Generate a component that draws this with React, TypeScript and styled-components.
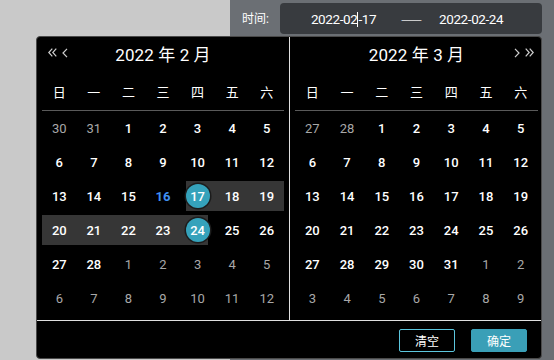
import React from 'react';
import styled, { createGlobalStyle } from 'styled-components';

const Global = createGlobalStyle`
  html, body { margin: 0; padding: 0; }
  body {
    background: #c9c9c9;
    font-family: Roboto, "Noto Sans CJK SC", sans-serif;
    width: 554px;
    height: 360px;
    overflow: hidden;
  }
  * { box-sizing: border-box; }
`;

const Page = styled.div`
  position: relative;
  display: flex;
  width: 554px;
  height: 360px;
`;

const Backdrop = styled.div`
  width: 230px;
  flex-shrink: 0;
`;

const Panel = styled.div`
  flex: 1;
  background: #6b6f74;
  padding: 3px 12px 0 12px;
`;

const FilterRow = styled.div`
  display: flex;
  align-items: center;
  gap: 11px;
  height: 31px;
`;

const Label = styled.span`
  color: #fff;
  font-size: 12px;
  margin-top: -3px;
`;

const RangeInput = styled.div`
  width: 262px;
  height: 31px;
  border-radius: 4px;
  background: #383b3f;
  display: flex;
  align-items: center;
  padding-left: 31px;
  color: #fff;
  font-size: 13.5px;
  letter-spacing: -0.4px;
`;

const DateText = styled.span`
  white-space: nowrap;
`;

const Caret = styled.span`
  display: inline-block;
  width: 0;
  height: 15px;
  border-left: 1px solid #fff;
  vertical-align: -3px;
`;

const Separator = styled.span`
  margin: 0 17px 0 25px;
  font-family: "Noto Sans CJK SC", sans-serif;
  font-size: 12.5px;
  color: #e6e6e6;
  letter-spacing: 0;
`;

const Popup = styled.div`
  position: absolute;
  left: 36px;
  top: 36px;
  width: 506px;
  height: 323px;
  background: #000;
  border: 1px solid #4a4a4a;
  border-radius: 4px;
  display: flex;
  flex-direction: column;
`;

const Months = styled.div`
  display: flex;
  height: 283px;
`;

const MonthPanel = styled.div<{ $side: 'left' | 'right' }>`
  flex: ${(p) => (p.$side === 'left' ? '0 0 253px' : '1')};
  border-right: ${(p) => (p.$side === 'left' ? '1px solid #e0e0e0' : 'none')};
  padding: ${(p) => (p.$side === 'left' ? '0 5px 0 5px' : '0 3px 0 5px')};
  display: flex;
  flex-direction: column;
`;

const Header = styled.div`
  display: grid;
  grid-template-columns: 1fr auto 1fr;
  align-items: center;
  height: 33px;
`;

const Title = styled.div`
  color: #fff;
  font-size: 17px;
  letter-spacing: 0.1px;
`;

const NavGroup = styled.div<{ $align: 'start' | 'end' }>`
  display: flex;
  align-items: center;
  gap: 5px;
  justify-self: ${(p) => p.$align};
  padding-left: ${(p) => (p.$align === 'start' ? '6px' : '0')};
  padding-right: ${(p) => (p.$align === 'end' ? '4px' : '0')};
  margin-top: -2px;
  color: #cfcfcf;
`;

const WeekRow = styled.div`
  display: grid;
  grid-template-columns: repeat(7, 1fr);
  align-items: center;
  height: 41px;
  padding-top: 3px;
  border-bottom: 1px solid #5a5a5a;
`;

const WeekDay = styled.div`
  text-align: center;
  color: #fff;
  font-size: 13px;
`;

const DayGrid = styled.div`
  display: grid;
  grid-template-columns: repeat(7, 1fr);
  grid-auto-rows: 34px;
`;

type RangePos = 'start' | 'mid' | 'end' | undefined;

const BAND = '#363636';

const Cell = styled.div<{ $range: RangePos }>`
  height: 30px;
  margin: 2px 0;
  display: flex;
  align-items: center;
  justify-content: center;
  background: ${(p) =>
    p.$range === 'mid'
      ? BAND
      : p.$range === 'start'
      ? `linear-gradient(90deg, transparent calc(50% - 11px), ${BAND} calc(50% - 11px))`
      : p.$range === 'end'
      ? `linear-gradient(90deg, ${BAND} calc(50% + 11px), transparent calc(50% + 11px))`
      : 'transparent'};
`;

const Day = styled.span<{ $muted: boolean; $today: boolean; $selected: boolean }>`
  width: 24px;
  height: 24px;
  border-radius: 50%;
  display: inline-flex;
  align-items: center;
  justify-content: center;
  font-size: 13px;
  font-weight: ${(p) => (p.$muted ? 400 : p.$today ? 700 : 500)};
  color: ${(p) => (p.$muted ? '#a8a8a8' : p.$today && !p.$selected ? '#3f8ff2' : '#fff')};
  background: ${(p) => (p.$selected ? '#35a2bb' : 'transparent')};
  box-shadow: ${(p) => (p.$selected ? '0 0 0 1.5px #1c1c1c' : 'none')};
`;

const Footer = styled.div`
  flex: 1;
  border-top: 1px solid #e0e0e0;
  display: flex;
  justify-content: flex-end;
  align-items: flex-start;
  gap: 16px;
  padding: 8px 14px 0 0;
`;

const Button = styled.button<{ $primary?: boolean }>`
  width: 56px;
  height: 23px;
  border-radius: 2px;
  font-family: "Noto Sans CJK SC", sans-serif;
  font-size: 12px;
  color: #fff;
  cursor: pointer;
  padding: 0;
  border: 1px solid ${(p) => (p.$primary ? '#3a9fb7' : '#5cc6de')};
  background: ${(p) => (p.$primary ? '#3a9fb7' : '#000')};
`;

const DoubleChevron = ({ dir }: { dir: 'left' | 'right' }) => (
  <svg width="9" height="9" viewBox="0 0 9 9" fill="none" stroke="currentColor" strokeWidth="1.2">
    {dir === 'left' ? (
      <path d="M4.3 0.6 L0.8 4.5 L4.3 8.4 M8.3 0.6 L4.8 4.5 L8.3 8.4" />
    ) : (
      <path d="M0.7 0.6 L4.2 4.5 L0.7 8.4 M4.7 0.6 L8.2 4.5 L4.7 8.4" />
    )}
  </svg>
);

const Chevron = ({ dir }: { dir: 'left' | 'right' }) => (
  <svg width="6" height="10" viewBox="0 0 6 10" fill="none" stroke="currentColor" strokeWidth="1.2">
    {dir === 'left' ? <path d="M5 0.8 L1 5 L5 9.2" /> : <path d="M1 0.8 L5 5 L1 9.2" />}
  </svg>
);

type DayInfo = { d: number; muted: boolean; today?: boolean; selected?: boolean; range?: RangePos };

const weekdays = ['日', '一', '二', '三', '四', '五', '六'];

function buildMonth(prevDays: number[], count: number, tail: number, opts?: { today?: number; start?: number; end?: number }): DayInfo[] {
  const list: DayInfo[] = [];
  prevDays.forEach((d) => list.push({ d, muted: true }));
  for (let d = 1; d <= count; d++) {
    let range: RangePos;
    let selected = false;
    if (opts?.start && opts?.end) {
      if (d === opts.start) { range = 'start'; selected = true; }
      else if (d === opts.end) { range = 'end'; selected = true; }
      else if (d > opts.start && d < opts.end) range = 'mid';
    }
    list.push({ d, muted: false, today: opts?.today === d, selected, range });
  }
  for (let d = 1; d <= tail; d++) list.push({ d, muted: true });
  return list;
}

const feb = buildMonth([30, 31], 28, 12, { today: 16, start: 17, end: 24 });
const mar = buildMonth([27, 28], 31, 9);

const Month = ({ side, title, days }: { side: 'left' | 'right'; title: string; days: DayInfo[] }) => (
  <MonthPanel $side={side}>
    <Header>
      <NavGroup $align="start">
        {side === 'left' && (
          <>
            <DoubleChevron dir="left" />
            <Chevron dir="left" />
          </>
        )}
      </NavGroup>
      <Title>{title}</Title>
      <NavGroup $align="end">
        {side === 'right' && (
          <>
            <Chevron dir="right" />
            <DoubleChevron dir="right" />
          </>
        )}
      </NavGroup>
    </Header>
    <WeekRow>
      {weekdays.map((w) => (
        <WeekDay key={w}>{w}</WeekDay>
      ))}
    </WeekRow>
    <DayGrid>
      {days.map((day, i) => (
        <Cell key={i} $range={day.range}>
          <Day $muted={day.muted} $today={!!day.today} $selected={!!day.selected}>
            {day.d}
          </Day>
        </Cell>
      ))}
    </DayGrid>
  </MonthPanel>
);

export default function App() {
  return (
    <>
      <Global />
      <Page>
        <Backdrop />
        <Panel>
          <FilterRow>
            <Label>时间:</Label>
            <RangeInput>
              <DateText>
                2022-02
                <Caret />
                -17
              </DateText>
              <Separator>——</Separator>
              <DateText>2022-02-24</DateText>
            </RangeInput>
          </FilterRow>
        </Panel>
        <Popup>
          <Months>
            <Month side="left" title="2022 年 2 月" days={feb} />
            <Month side="right" title="2022 年 3 月" days={mar} />
          </Months>
          <Footer>
            <Button>清空</Button>
            <Button $primary>确定</Button>
          </Footer>
        </Popup>
      </Page>
    </>
  );
}
